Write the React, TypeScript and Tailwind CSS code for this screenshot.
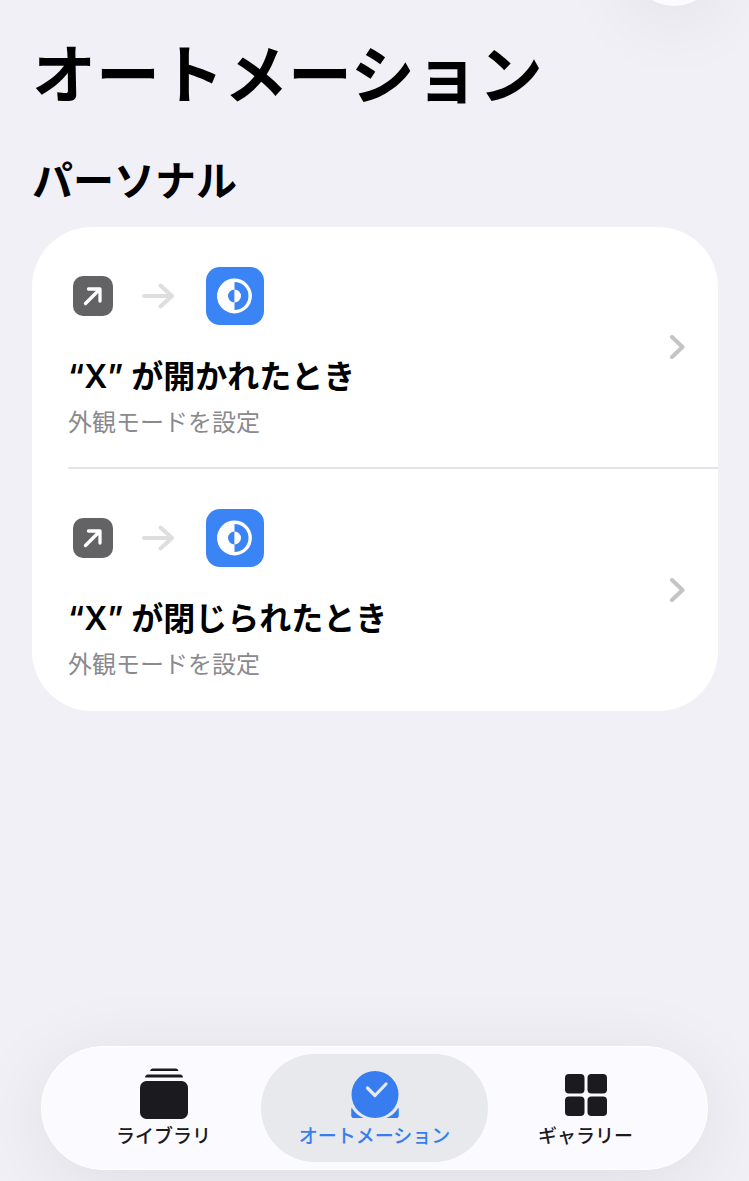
import React from "react";

const automations = [
  { id: 1, title: "“X” が開かれたとき", action: "外観モードを設定" },
  { id: 2, title: "“X” が閉じられたとき", action: "外観モードを設定" },
];

const OpenAppIcon = () => (
  <svg className="h-10 w-10" viewBox="0 0 40 40" fill="none" aria-hidden="true">
    <rect width="40" height="40" rx="10" fill="#636366" />
    <path
      d="M12.500 27.500 27 13M15.500 13H27v12"
      stroke="#fff"
      strokeWidth="3.300"
      strokeLinecap="round"
      strokeLinejoin="round"
    />
  </svg>
);

const ArrowIcon = () => (
  <svg className="h-8 w-8" viewBox="0 0 32 32" fill="none" aria-hidden="true">
    <path
      d="M2 16h28M18.500 5.500 30 16 18.500 26.500"
      stroke="#dedede"
      strokeWidth="4"
      strokeLinecap="round"
      strokeLinejoin="round"
    />
  </svg>
);

const AppearanceIcon = () => (
  <svg className="h-[58px] w-[58px]" viewBox="0 0 58 58" aria-hidden="true">
    <rect width="58" height="58" rx="14" fill="#3b84f6" />
    <circle cx="28.500" cy="29" r="15.700" fill="none" stroke="#fff" strokeWidth="3.400" />
    <path d="M28.500 12a17 17 0 0 0 0 34z" fill="#fff" />
    <path d="M28.500 22.500a6.500 6.500 0 0 0 0 13z" fill="#3b84f6" />
    <path d="M28.500 22.500a6.500 6.500 0 0 1 0 13z" fill="#fff" />
  </svg>
);

const ChevronIcon = () => (
  <svg className="h-6 w-4" viewBox="0 0 16 24" fill="none" aria-hidden="true">
    <path
      d="M3 2 13.500 12 3 22"
      stroke="#c4c4c6"
      strokeWidth="4"
      strokeLinecap="round"
      strokeLinejoin="round"
    />
  </svg>
);

const LibraryIcon = () => (
  <svg className="h-[52px] w-[48px]" viewBox="0 0 48 52" fill="#1b1a1f" aria-hidden="true">
    <path d="M12.500 1.500h23.500q2 0 2.500 2.500H10q.5-2.500 2.500-2.500z" />
    <path d="M8 7.500h32q2.500 0 3 3H5q.5-3 3-3z" />
    <rect y="14" width="48" height="38" rx="6.500" />
  </svg>
);

const AutomationIcon = () => (
  <svg className="h-[48px] w-[48px]" viewBox="0 0 48 48" aria-hidden="true">
    <path
      d="M.5 36.500Q5 44 12.500 47H3Q.5 47 .5 44.500zM47.500 36.500Q43 44 35.500 47h9.500q2.500 0 2.500-2.500z"
      fill="#377df0"
    />
    <circle cx="24" cy="23.500" r="25" fill="#e8e9ec" />
    <path
      d="M.5 37.500Q4 43.500 10.500 47H3Q.5 47 .5 44.500zM47.500 37.500Q44 43.500 37.500 47h7.500q2.500 0 2.500-2.500z"
      fill="#377df0"
    />
    <circle cx="24" cy="23.500" r="23.500" fill="#377df0" />
    <path
      d="m16.500 17 7.500 7.500L35 13"
      fill="none"
      stroke="#e8e9ec"
      strokeWidth="3.200"
      strokeLinecap="round"
      strokeLinejoin="round"
    />
  </svg>
);

const GalleryIcon = () => (
  <svg className="mb-[3px] h-[42px] w-[42px]" viewBox="0 0 42 42" fill="#1b1a1f" aria-hidden="true">
    <rect width="19.500" height="19.500" rx="4" />
    <rect x="22.500" width="19.500" height="19.500" rx="4" />
    <rect y="22.500" width="19.500" height="19.500" rx="4" />
    <rect x="22.500" y="22.500" width="19.500" height="19.500" rx="4" />
  </svg>
);

const tabs = [
  { label: "ライブラリ", icon: <LibraryIcon />, active: false },
  { label: "オートメーション", icon: <AutomationIcon />, active: true },
  { label: "ギャラリー", icon: <GalleryIcon />, active: false },
];

const App = () => {
  return (
    <div className="relative flex min-h-screen flex-col overflow-hidden bg-[#f1f0f6] font-['Inter','Noto_Sans_CJK_JP',sans-serif] text-black">
      <button
        aria-label="追加"
        className="absolute -top-[82px] right-[31px] h-[88px] w-[88px] rounded-full bg-[#fcfcff] shadow-[0_12px_80px_rgba(0,0,0,0.08)]"
      ></button>

      <main className="flex-1 px-8 pt-[35px]">
        <h1 className="text-[64px] leading-20 font-bold">オートメーション</h1>
        <h2 className="mt-9 text-[41px] leading-[60px] font-bold">パーソナル</h2>
        <ul className="mt-4 -mr-px overflow-hidden rounded-[60px] bg-white">
          {automations.map((item, i) => (
            <li key={item.id} className="pl-9">
              <button
                className={`flex h-[242px] w-full items-center justify-between pr-[33px] text-left ${
                  i < automations.length - 1 ? "border-b-2 border-[#e4e4e6]" : ""
                }`}
              >
                <div className="self-start pt-10">
                  <div className="flex items-center pl-[5px]">
                    <OpenAppIcon />
                    <span className="mr-8 ml-[29px]">
                      <ArrowIcon />
                    </span>
                    <AppearanceIcon />
                  </div>
                  <div className="mt-7 text-[32px] leading-12 font-semibold">{item.title}</div>
                  <div className="mt-1 text-2xl leading-9 text-[#8a8a8e]">{item.action}</div>
                </div>
                <ChevronIcon />
              </button>
            </li>
          ))}
        </ul>
      </main>

      <nav className="mx-[41px] mb-[11px] flex h-[124px] rounded-full border border-white bg-[#fbfaff] px-4 py-[7px] shadow-[0_12px_80px_rgba(0,0,0,0.08)]">
        {tabs.map((tab) => (
          <div key={tab.label} className="flex-1">
            <div className={tab.active ? "-mx-2 rounded-full bg-[#e8e9ec]" : ""}>
              <button
                className={`flex h-[108px] w-full flex-col items-center text-[19px] leading-7 font-medium ${
                  tab.active ? "text-[#377df0]" : "text-[#1b1a1f]"
                }`}
              >
                <span className="flex h-[69px] items-end justify-center pb-1">{tab.icon}</span>
                {tab.label}
              </button>
            </div>
          </div>
        ))}
      </nav>
    </div>
  );
};

export default App;
